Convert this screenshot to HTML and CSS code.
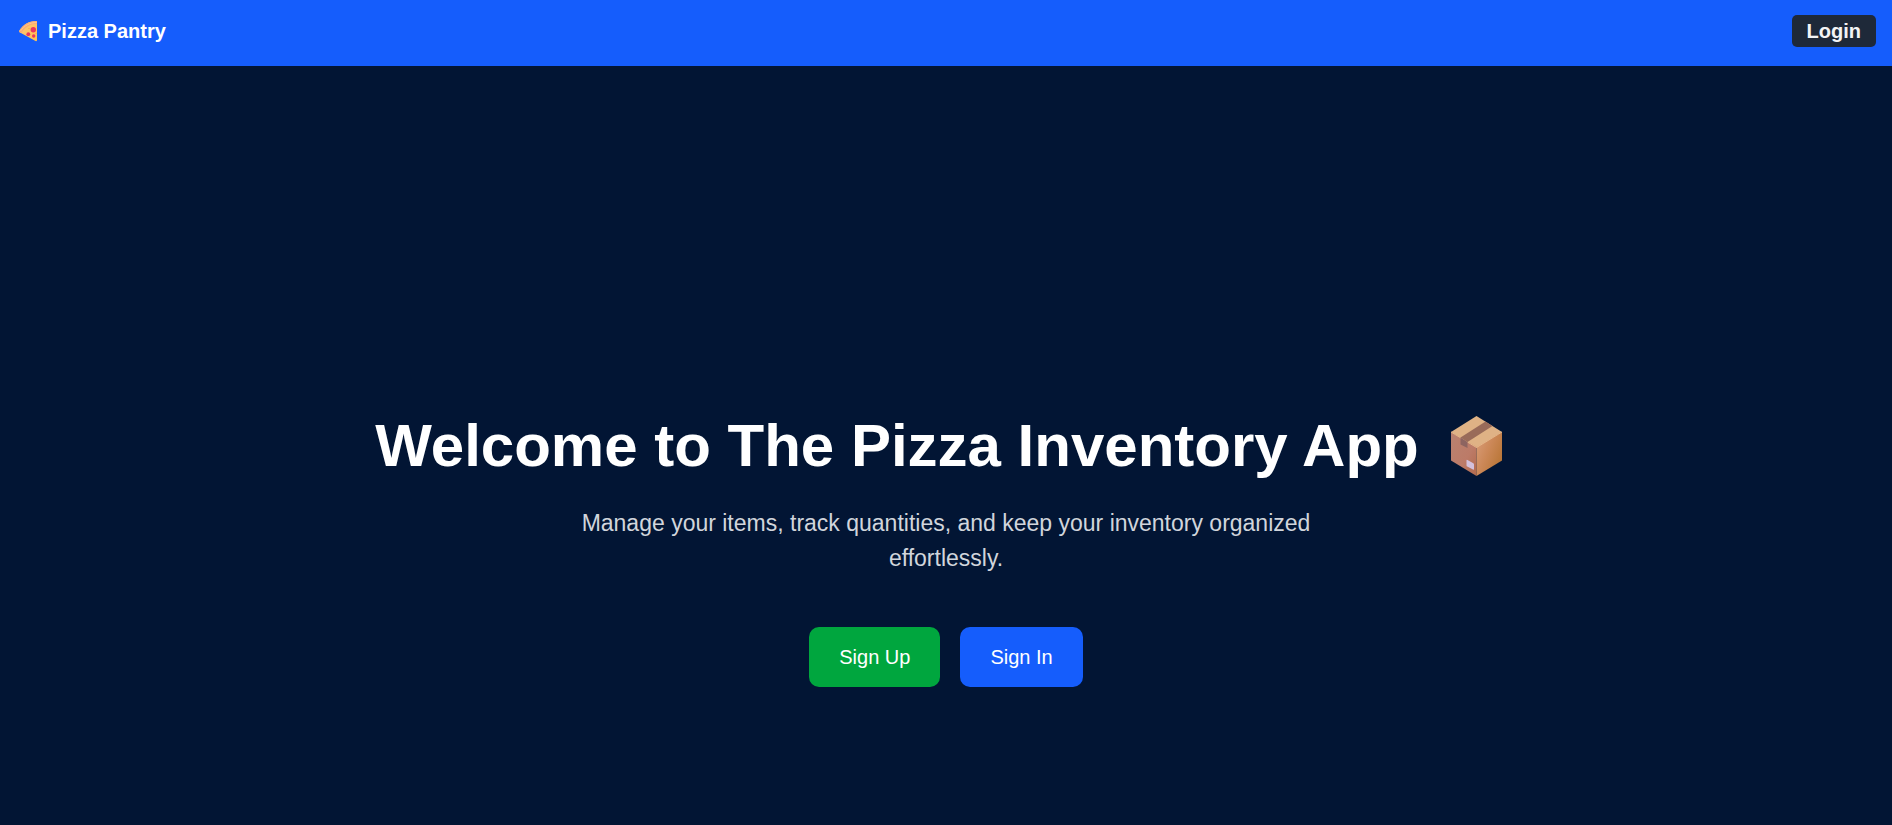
FILE: index.html
```html
<!DOCTYPE html>
<html lang="en">
<head>
<meta charset="utf-8">
<meta name="viewport" content="width=device-width, initial-scale=1">
<title>Pizza Pantry</title>
<link rel="stylesheet" href="styles.css">
</head>
<body>
<header class="navbar">
  <a class="brand" href="#">
    <svg class="brand-icon" viewBox="0 0 27 24" aria-hidden="true">
      <defs>
        <linearGradient id="cheese" x1="0" y1="0" x2="1" y2="1">
          <stop offset="0" stop-color="#ffc878"/>
          <stop offset="1" stop-color="#fdc04f"/>
        </linearGradient>
      </defs>
      <path d="M21 3V21.500Q20.500 22.500 19.500 22L4 13.600Q2.600 12.600 3.500 11.300C7 6 12.500 2 20 2Q21 2 21 3Z" fill="url(#cheese)"/>
      <path d="M3.300 11.700C7 5.500 13 1.800 21 2V5C14 5 9.500 8 5.800 13.300L4.700 14Q2.400 13.200 3.300 11.700Z" fill="#f9ac74"/>
      <path d="M4.500 12C8.500 6.500 13.500 3.500 20.800 3.500" fill="none" stroke="#ffc88c" stroke-width="1"/>
      <circle cx="17.300" cy="10.800" r="2.700" fill="#e9355f"/>
      <circle cx="12.300" cy="15.200" r="1.900" fill="#e9355f"/>
      <circle cx="17.700" cy="17" r="1.700" fill="#e9355f"/>
      <circle cx="13" cy="9.500" r=".6" fill="#f7a04a"/>
      <circle cx="20" cy="14.500" r=".6" fill="#f7a04a"/>
    </svg>
    <span>Pizza Pantry</span>
  </a>
  <button class="login" type="button">Login</button>
</header>
<main class="hero">
  <h1 class="title">
    <span>Welcome to The Pizza Inventory App</span>
    <svg class="title-icon" viewBox="0 0 82 64" aria-hidden="true">
      <defs>
        <linearGradient id="left" x1="0" y1="0" x2="1" y2="1">
          <stop offset="0" stop-color="#b98270"/>
          <stop offset=".6" stop-color="#bc7b68"/>
          <stop offset="1" stop-color="#b36a4d"/>
        </linearGradient>
        <linearGradient id="right" x1="0" y1="0" x2="1" y2=".7">
          <stop offset="0" stop-color="#da9f7c"/>
          <stop offset=".5" stop-color="#cc8858"/>
          <stop offset="1" stop-color="#b87535"/>
        </linearGradient>
      </defs>
      <path d="M16 18L41.500 2L67 18L41.500 34Z" fill="#dfb285"/>
      <path d="M16 18L41.500 33V62L16 46.500Z" fill="url(#left)"/>
      <path d="M67 18L41.500 33V62L67 46.500Z" fill="url(#right)"/>
      <path d="M16 18L41.500 33.500L67 18" fill="none" stroke="#e6b88b" stroke-width="1"/>
      <path d="M25.500 23.500L50.500 7.500L57.500 12L32.500 28Z" fill="#996b59"/>
      <path d="M25.500 23.500L32.500 28V34L25.500 30.500Z" fill="#8d6460"/>
      <path d="M31.500 46.500Q31.500 45.300 32.500 45.900L38.300 49.300Q39 49.700 39 50.500V55Q39 56.200 38 55.600L32.200 52.600Q31.500 52.200 31.500 51.400Z" fill="#d3c1dc"/>
    </svg>
  </h1>
  <p class="lead">Manage your items, track quantities, and keep your inventory organized effortlessly.</p>
  <div class="actions">
    <button class="btn btn-signup" type="button">Sign Up</button>
    <button class="btn btn-signin" type="button">Sign In</button>
  </div>
</main>
</body>
</html>
```
FILE: styles.css
```css
* {
  box-sizing: border-box;
}

body {
  margin: 0;
  min-height: 100vh;
  display: flex;
  flex-direction: column;
  background: #021534;
  color: #fff;
  font-family: "Liberation Sans", Arial, sans-serif;
}

.navbar {
  display: flex;
  justify-content: space-between;
  align-items: center;
  padding: 15px 16px 19px;
  background: #155dfc;
}

.brand {
  display: flex;
  align-items: center;
  gap: 5px;
  color: #fff;
  font-size: 20px;
  font-weight: 700;
  line-height: 24px;
  text-decoration: none;
}

.brand-icon {
  width: 27px;
  height: 24px;
}

.login {
  padding: 4px 15px;
  border: 0;
  border-radius: 5px;
  background: #1e2939;
  color: #f3f4f6;
  font: 700 20px/24px "Liberation Sans", Arial, sans-serif;
  cursor: pointer;
}

.hero {
  flex: 1;
  display: flex;
  flex-direction: column;
  align-items: center;
  justify-content: flex-end;
  padding: 48px 20px 138px;
  text-align: center;
}

.title {
  display: flex;
  align-items: center;
  gap: 16px;
  margin: 0 0 28px;
  font-size: 60px;
  font-weight: 700;
  line-height: 64px;
}

.title-icon {
  width: 82px;
  height: 64px;
}

.lead {
  max-width: 768px;
  margin: 0 0 51px;
  color: #d1d5dc;
  font-size: 23px;
  line-height: 35px;
}

.actions {
  display: flex;
  gap: 20px;
}

.btn {
  padding: 18px 30px;
  border: 0;
  border-radius: 10px;
  color: #fff;
  font: 400 20px/24px "Liberation Sans", Arial, sans-serif;
  cursor: pointer;
}

.btn-signup {
  background: #00a63e;
}

.btn-signin {
  background: #155dfc;
}
```
